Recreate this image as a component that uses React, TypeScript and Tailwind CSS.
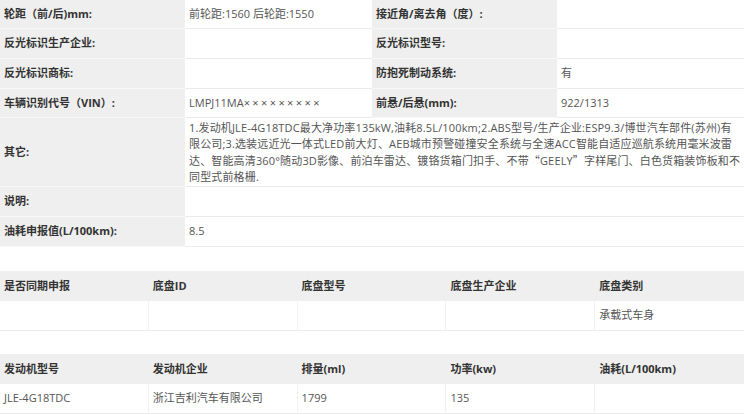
import React from "react";

type Pair = { label: string; value?: React.ReactNode };

const cjk = { fontFamily: '"Noto Sans CJK SC", sans-serif' };

const topRows: { h: string; cells: Pair[] }[] = [
  { h: "h-[29px]", cells: [{ label: "轮距（前/后)mm:", value: "前轮距:1560 后轮距:1550" }, { label: "接近角/离去角（度）:" }] },
  { h: "h-[30px]", cells: [{ label: "反光标识生产企业:" }, { label: "反光标识型号:" }] },
  { h: "h-[30px]", cells: [{ label: "反光标识商标:" }, { label: "防抱死制动系统:", value: "有" }] },
  {
    h: "h-[29px]",
    cells: [
      {
        label: "车辆识别代号（VIN）:",
        value: (
          <span>
            LMPJ11MA<span className="tracking-[2.4px]">×××××××××</span>
          </span>
        ),
      },
      { label: "前悬/后悬(mm):", value: "922/1313" },
    ],
  },
];

const otherLines: React.ReactNode[] = [
  "1.发动机JLE-4G18TDC最大净功率135kW,油耗8.5L/100km;2.ABS型号/生产企业:ESP9.3/博世汽车部件(苏州)有",
  "限公司;3.选装远近光一体式LED前大灯、AEB城市预警碰撞安全系统与全速ACC智能自适应巡航系统用毫米波雷",
  <>
    达、智能高清360°随动3D影像、前泊车雷达、镀铬货箱门扣手、不带<span style={cjk}>“</span>GEELY<span style={cjk}>”</span>字样尾门、白色货箱装饰板和不
  </>,
  "同型式前格栅.",
];

const font = { fontFamily: '"Open Sans", "Noto Sans CJK SC", sans-serif' };

function Label({ children, className = "" }: { children?: React.ReactNode; className?: string }) {
  return (
    <div className={`flex items-center bg-[#efefef] border-b border-[#f8f8f8] pl-[4px] text-[11px] font-bold text-[#333] ${className}`}>
      {children}
    </div>
  );
}

function Value({ children, className = "" }: { children?: React.ReactNode; className?: string }) {
  return (
    <div className={`flex items-center bg-white border-b border-[#ebebeb] pl-[4px] text-[11px] text-[#555] ${className}`}>
      {children}
    </div>
  );
}

function SubTable({ head, row }: { head: string[]; row: string[] }) {
  return (
    <div className="grid grid-cols-5">
      {head.map((h) => (
        <div key={h} className="flex h-[30px] items-center bg-[#efefef] pl-[4px] text-[11px] font-bold text-[#333]">
          {h}
        </div>
      ))}
      {row.map((v, i) => (
        <div
          key={i}
          className={`flex h-[30px] items-center border-b border-[#ebebeb] pl-[4px] text-[11px] text-[#555] ${i < 4 ? "border-r border-r-[#f2f2f2]" : ""}`}
        >
          {v}
        </div>
      ))}
    </div>
  );
}

export default function App() {
  return (
    <div className="w-[744px] h-[415px] overflow-hidden bg-white" style={font}>
      <div className="grid grid-cols-[185px_187px_185px_187px]">
        {topRows.map((r, i) => (
          <React.Fragment key={i}>
            {r.cells.map((c, j) => (
              <React.Fragment key={j}>
                <Label className={r.h}>{c.label}</Label>
                <Value className={r.h}>{c.value}</Value>
              </React.Fragment>
            ))}
          </React.Fragment>
        ))}
        <Label className="h-[69px]">其它:</Label>
        <Value className="col-span-3 h-[69px]">
          <div className="leading-[16px] whitespace-nowrap tracking-[0.15px]">
            {otherLines.map((l, i) => (
              <div key={i}>{l}</div>
            ))}
          </div>
        </Value>
        <Label className="h-[30px]">说明:</Label>
        <Value className="col-span-3 h-[30px]" />
        <Label className="h-[30px]">油耗申报值(L/100km):</Label>
        <Value className="col-span-3 h-[30px]">8.5</Value>
      </div>

      <div className="mt-[24px]">
        <SubTable
          head={["是否同期申报", "底盘ID", "底盘型号", "底盘生产企业", "底盘类别"]}
          row={["", "", "", "", "承载式车身"]}
        />
      </div>

      <div className="mt-[23px]">
        <SubTable
          head={["发动机型号", "发动机企业", "排量(ml)", "功率(kw)", "油耗(L/100km)"]}
          row={["JLE-4G18TDC", "浙江吉利汽车有限公司", "1799", "135", ""]}
        />
      </div>
    </div>
  );
}
